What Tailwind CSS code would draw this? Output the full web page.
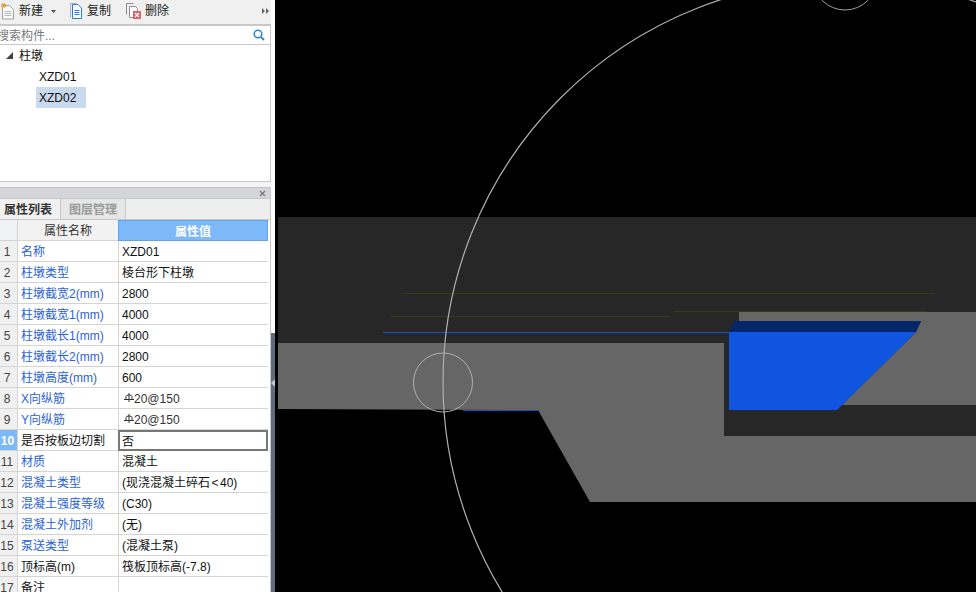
<!DOCTYPE html>
<html lang="zh">
<head>
    <meta charset="UTF-8">
    <title>柱墩</title>
    <script src="https://cdn.jsdelivr.net/npm/@tailwindcss/browser@4"></script>
</head>
<body class="w-[976px] h-[592px] overflow-hidden bg-black flex font-['Liberation_Sans','Noto_Sans_CJK_SC',sans-serif] text-[12px] leading-none text-[#111]">
    <!-- left panel -->
    <div class="w-[271px] h-[592px] shrink-0 flex flex-col bg-[#f4f4f4] overflow-hidden">
        <div class="h-[26px] shrink-0 pb-[2px] flex items-center text-[#222] bg-[#f0f0f0] border-b-2 border-[#c8c8c8]">
            <svg class="ml-[1px] w-[14px] h-[17px]" viewBox="0 0 14 17" fill="none"><path d="M1.500 2.500h7l4 4v9.500h-11z" fill="#fafafa" stroke="#9aa0a6"/><path d="M3.500 8.500h7M3.500 10.500h7M3.500 12.500h7" stroke="#b5b9bd"/><path d="M0 1h5v1H0zM1 0h1v5H1zM3 0h1v5H3zM0 3h5v1H0z" fill="#f0a030"/></svg>
            <span class="ml-[4px]">新建</span>
            <svg class="ml-[8px] w-[5px] h-[3px]" viewBox="0 0 5 3"><path d="M0 0h5L2.500 3z" fill="#555"/></svg>
            <svg class="ml-[14px] w-[12px] h-[16px]" viewBox="0 0 12 16" fill="none"><path d="M.5 14.500v-14h6" stroke="#9ab4cc"/><path d="M2.500 1.500h5.500l3.500 3.500v10.500h-9z" fill="#fff" stroke="#2b7cc9"/><path d="M4.500 7.500h5M4.500 9.500h5M4.500 11.500h5" stroke="#2b7cc9"/></svg>
            <span class="ml-[5px]">复制</span>
            <svg class="ml-[15px] w-[15px] h-[16px]" viewBox="0 0 15 16" fill="none"><path d="M.5 11.500v-11h7" stroke="#8a8f96"/><path d="M3.500 3.500h6l2 2v9h-8z" fill="#fff" stroke="#8a8f96"/><rect x="7" y="8" width="8" height="8" fill="#d9646a"/><path d="M9 10l4 4M13 10l-4 4" stroke="#fff" stroke-width="1.200"/></svg>
            <span class="ml-[4px]">删除</span>
            <svg class="ml-auto mr-[2px] w-[7px] h-[6px]" viewBox="0 0 7 6"><path d="M0 0l3 3-3 3zM4 0l3 3-3 3z" fill="#666"/></svg>
        </div>
        <div class="h-[156px] shrink-0 bg-white border-r border-b border-[#c8c8c8] flex flex-col">
            <div class="h-[19px] shrink-0 flex items-center border-b border-[#c8c8c8] text-[#777] whitespace-nowrap overflow-hidden">
                <span class="ml-[-3px] mt-[2px]">搜索构件...</span>
                <svg class="ml-auto mr-[5px] w-[12px] h-[12px]" viewBox="0 0 12 12" fill="none"><circle cx="5" cy="5" r="3.800" stroke="#2b87c9" stroke-width="1.500"/><path d="M8 8l3 3" stroke="#2b87c9" stroke-width="1.800"/></svg>
            </div>
            <div class="h-[21px] shrink-0 flex items-center">
                <svg class="ml-[6px] w-[7px] h-[7px]" viewBox="0 0 7 7"><path d="M7 0v7H0z" fill="#444"/></svg>
                <span class="ml-[6px]">柱墩</span>
            </div>
            <div class="h-[21px] shrink-0 flex items-center pl-[39px]">XZD01</div>
            <div class="h-[21px] shrink-0 ml-[36px] w-[50px] pl-[3px] flex items-center bg-[#c9d9ee]">XZD02</div>
        </div>
        <div class="h-[5px] shrink-0 bg-[#f4f4f4]"></div>
        <div class="flex-1 min-h-0 flex flex-col bg-white border-r border-[#c8c8c8]">
            <div class="h-[11px] shrink-0 bg-[#d4d6da] border-t border-[#c4c4c4] flex items-center justify-end">
                <svg class="mr-[4px] w-[7px] h-[7px]" viewBox="0 0 7 7"><path d="M1 1l5 5M6 1l-5 5" stroke="#777" stroke-width="1.300"/></svg>
            </div>
            <div class="h-[22px] shrink-0 flex items-stretch border-t border-b border-[#c8c8c8] bg-[#eeeeee]">
                <div class="w-[61px] bg-[#f2f2f2] flex items-center pl-[4px] pt-[2px] font-bold text-[#333] border-r border-[#c8c8c8]">属性列表</div>
                <div class="w-[65px] flex items-center justify-center pt-[2px] font-bold text-[#999] bg-[#e6e6e6] border-r border-[#c8c8c8]">图层管理</div>
            </div>
            <div class="grid grid-cols-[18px_101px_149px] auto-rows-[21px] bg-white [&>div]:pt-[2px]">
                <div class="bg-[#f0f2f5] border-b border-r border-[#d4d4d4]"></div>
                <div class="bg-[#f2f2f2] border-b border-r border-[#d4d4d4] flex items-center justify-center text-[#333]">属性名称</div>
                <div class="ml-[-1px] bg-[#7db8f8] border border-[#5fa3ea] flex items-center justify-center font-bold text-white">属性值</div>

                <div class="bg-[#f0f0f0] border-b border-r border-[#d4d4d4] flex items-center justify-center pr-[3px] text-[#444]">1</div>
                <div class="border-b border-r border-[#d4d4d4] flex items-center pl-[3px] text-[#2b62d9]">名称</div>
                <div class="border-b border-[#d4d4d4] flex items-center pl-[3px]">XZD01</div>

                <div class="bg-[#f0f0f0] border-b border-r border-[#d4d4d4] flex items-center justify-center pr-[3px] text-[#444]">2</div>
                <div class="border-b border-r border-[#d4d4d4] flex items-center pl-[3px] text-[#2b62d9]">柱墩类型</div>
                <div class="border-b border-[#d4d4d4] flex items-center pl-[3px]">棱台形下柱墩</div>

                <div class="bg-[#f0f0f0] border-b border-r border-[#d4d4d4] flex items-center justify-center pr-[3px] text-[#444]">3</div>
                <div class="border-b border-r border-[#d4d4d4] flex items-center pl-[3px] text-[#2b62d9]">柱墩截宽2(mm)</div>
                <div class="border-b border-[#d4d4d4] flex items-center pl-[3px]">2800</div>

                <div class="bg-[#f0f0f0] border-b border-r border-[#d4d4d4] flex items-center justify-center pr-[3px] text-[#444]">4</div>
                <div class="border-b border-r border-[#d4d4d4] flex items-center pl-[3px] text-[#2b62d9]">柱墩截宽1(mm)</div>
                <div class="border-b border-[#d4d4d4] flex items-center pl-[3px]">4000</div>

                <div class="bg-[#f0f0f0] border-b border-r border-[#d4d4d4] flex items-center justify-center pr-[3px] text-[#444]">5</div>
                <div class="border-b border-r border-[#d4d4d4] flex items-center pl-[3px] text-[#2b62d9]">柱墩截长1(mm)</div>
                <div class="border-b border-[#d4d4d4] flex items-center pl-[3px]">4000</div>

                <div class="bg-[#f0f0f0] border-b border-r border-[#d4d4d4] flex items-center justify-center pr-[3px] text-[#444]">6</div>
                <div class="border-b border-r border-[#d4d4d4] flex items-center pl-[3px] text-[#2b62d9]">柱墩截长2(mm)</div>
                <div class="border-b border-[#d4d4d4] flex items-center pl-[3px]">2800</div>

                <div class="bg-[#f0f0f0] border-b border-r border-[#d4d4d4] flex items-center justify-center pr-[3px] text-[#444]">7</div>
                <div class="border-b border-r border-[#d4d4d4] flex items-center pl-[3px] text-[#2b62d9]">柱墩高度(mm)</div>
                <div class="border-b border-[#d4d4d4] flex items-center pl-[3px]">600</div>

                <div class="bg-[#f0f0f0] border-b border-r border-[#d4d4d4] flex items-center justify-center pr-[3px] text-[#444]">8</div>
                <div class="border-b border-r border-[#d4d4d4] flex items-center pl-[3px] text-[#2b62d9]">X向纵筋</div>
                <div class="border-b border-[#d4d4d4] flex items-center pl-[5px]">
                    <svg class="w-[10px] h-[9px] mb-[3px]" viewBox="0 0 10 9" fill="none" stroke="#333"><path d="M2 6.500v-3q0-1.500 3-1.500t3 1.500v3M0 6.500h10M5 0v9"/></svg>
                    <span class="text-[#333]">20@150</span>
                </div>

                <div class="bg-[#f0f0f0] border-b border-r border-[#d4d4d4] flex items-center justify-center pr-[3px] text-[#444]">9</div>
                <div class="border-b border-r border-[#d4d4d4] flex items-center pl-[3px] text-[#2b62d9]">Y向纵筋</div>
                <div class="border-b border-[#d4d4d4] flex items-center pl-[5px]">
                    <svg class="w-[10px] h-[9px] mb-[3px]" viewBox="0 0 10 9" fill="none" stroke="#333"><path d="M2 6.500v-3q0-1.500 3-1.500t3 1.500v3M0 6.500h10M5 0v9"/></svg>
                    <span class="text-[#333]">20@150</span>
                </div>

                <div class="bg-[#7db8f8] border-b border-r border-[#d4d4d4] flex items-center justify-center pr-[2px] font-bold text-white">10</div>
                <div class="border-b border-r border-[#d4d4d4] flex items-center pl-[3px]">是否按板边切割</div>
                <div class="ml-[-1px] border-2 border-[#777] flex items-center pl-[2px]">否</div>

                <div class="bg-[#f0f0f0] border-b border-r border-[#d4d4d4] flex items-center justify-center pr-[3px] text-[#444]">11</div>
                <div class="border-b border-r border-[#d4d4d4] flex items-center pl-[3px] text-[#2b62d9]">材质</div>
                <div class="border-b border-[#d4d4d4] flex items-center pl-[3px]">混凝土</div>

                <div class="bg-[#f0f0f0] border-b border-r border-[#d4d4d4] flex items-center justify-center pr-[3px] text-[#444]">12</div>
                <div class="border-b border-r border-[#d4d4d4] flex items-center pl-[3px] text-[#2b62d9]">混凝土类型</div>
                <div class="border-b border-[#d4d4d4] flex items-center pl-[3px]">(现浇混凝土碎石<span class="px-[1.5px]">&lt;</span>40)</div>

                <div class="bg-[#f0f0f0] border-b border-r border-[#d4d4d4] flex items-center justify-center pr-[3px] text-[#444]">13</div>
                <div class="border-b border-r border-[#d4d4d4] flex items-center pl-[3px] text-[#2b62d9]">混凝土强度等级</div>
                <div class="border-b border-[#d4d4d4] flex items-center pl-[3px]">(C30)</div>

                <div class="bg-[#f0f0f0] border-b border-r border-[#d4d4d4] flex items-center justify-center pr-[3px] text-[#444]">14</div>
                <div class="border-b border-r border-[#d4d4d4] flex items-center pl-[3px] text-[#2b62d9]">混凝土外加剂</div>
                <div class="border-b border-[#d4d4d4] flex items-center pl-[3px]">(无)</div>

                <div class="bg-[#f0f0f0] border-b border-r border-[#d4d4d4] flex items-center justify-center pr-[3px] text-[#444]">15</div>
                <div class="border-b border-r border-[#d4d4d4] flex items-center pl-[3px] text-[#2b62d9]">泵送类型</div>
                <div class="border-b border-[#d4d4d4] flex items-center pl-[3px]">(混凝土泵)</div>

                <div class="bg-[#f0f0f0] border-b border-r border-[#d4d4d4] flex items-center justify-center pr-[3px] text-[#444]">16</div>
                <div class="border-b border-r border-[#d4d4d4] flex items-center pl-[3px]">顶标高(m)</div>
                <div class="border-b border-[#d4d4d4] flex items-center pl-[3px]">筏板顶标高(-7.8)</div>

                <div class="bg-[#f0f0f0] border-b border-r border-[#d4d4d4] flex items-center justify-center pr-[3px] text-[#444]">17</div>
                <div class="border-b border-r border-[#d4d4d4] flex items-center pl-[3px]">备注</div>
                <div class="border-b border-[#d4d4d4]"></div>
            </div>
        </div>
    </div>
    <!-- sash -->
    <div class="w-[4px] h-[592px] shrink-0 flex flex-col bg-white">
        <div class="h-[333px] shrink-0"></div>
        <div class="flex-1 bg-[#5f6b78] flex flex-col items-center">
            <svg class="mt-[46px] w-[4px] h-[8px]" viewBox="0 0 4 8"><path d="M4 0v8L0 4z" fill="#c4c9ce"/></svg>
        </div>
    </div>
    <!-- drawing canvas -->
    <svg class="w-[701px] h-[592px] shrink-0" viewBox="275 0 701 592" fill="none">
        <path d="M278 217H976V436H724V343H278Z" fill="#272727"/>
        <path d="M739 312H976V405H842L916 332L921 321H739Z" fill="#666666"/>
        <path d="M278 343H724V436H976V502H590L538 410L278 409Z" fill="#666666"/>
        <path d="M403 293.500H935M391 316.500H670M673 311.500H926" stroke="#3a3a12"/>
        <path d="M383 332.500H729M463 410.500H538" stroke="#1450c8"/>
        <path d="M734 321H921L916 332H729Z" fill="#05266b"/>
        <path d="M729 332H916L837 410H729Z" fill="#0f55e0"/>
        <circle cx="845" cy="382" r="402" stroke="#b0b0b0" stroke-width="1.200"/>
        <circle cx="443" cy="382.500" r="29.500" stroke="#b0b0b0"/>
        <circle cx="845" cy="-22" r="32" stroke="#a0a0a0"/>
    </svg>
</body>
</html>
